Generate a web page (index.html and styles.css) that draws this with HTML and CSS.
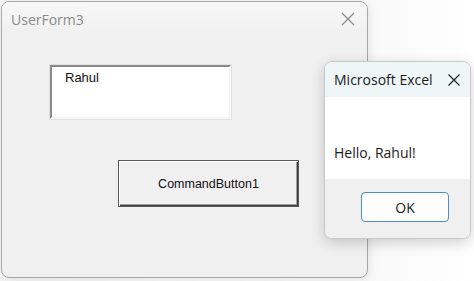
FILE: index.html
```html
<!DOCTYPE html>
<html>
<head>
<meta charset="utf-8">
<link rel="stylesheet" href="styles.css">
</head>
<body>
<div class="desk">
  <div class="form">
    <div class="form-title">
      <span class="form-name">UserForm3</span>
      <svg class="form-close" width="14" height="14" viewBox="0 0 14 14"><path d="M1 1L13 13M13 1L1 13" stroke="#8a8a8a" stroke-width="1.2" fill="none"/></svg>
    </div>
    <div class="form-body">
      <div class="textbox">Rahul</div>
      <div class="cmdbtn">CommandButton1</div>
    </div>
  </div>
  <div class="msgbox">
    <div class="msg-title">
      <span>Microsoft Excel</span>
      <svg class="msg-close" width="14" height="14" viewBox="0 0 14 14"><path d="M1.5 1.5L12.5 12.5M12.5 1.5L1.5 12.5" stroke="#222" stroke-width="1.2" fill="none"/></svg>
    </div>
    <div class="msg-body">Hello, Rahul!</div>
    <div class="msg-foot"><div class="okbtn">OK</div></div>
  </div>
</div>
</body>
</html>
```
FILE: styles.css
```css
html, body { margin: 0; padding: 0; }
body {
  width: 474px; height: 281px; overflow: hidden;
  background: linear-gradient(90deg, #f4f4f4 0%, #f8f8f8 75%, #ffffff 100%);
}
.desk { position: relative; width: 474px; height: 281px; padding: 1px 0 0 1px; box-sizing: border-box; }
.form {
  width: 367px; height: 277px; box-sizing: border-box;
  border: 1px solid #a8a8a8; border-radius: 8px;
  background: #f0f0f0;
  box-shadow: 2px 2px 8px rgba(0,0,0,0.08);
  display: flex; flex-direction: column;
}
.form-title {
  height: 34px; flex: none; display: flex; align-items: center; justify-content: space-between;
  padding: 0 12px 0 9px;
  background: linear-gradient(180deg, #f7f7f7, #f0f0f0);
  border-radius: 8px 8px 0 0;
}
.form-name { font-family: "Open Sans", "Noto Sans", sans-serif; font-size: 14px; color: #8a8a8a; }
.form-body { flex: 1; padding: 29px 0 0 48px; }
.textbox {
  width: 181px; height: 54px; box-sizing: border-box;
  background: #fff;
  border-top: 2px solid #8a8a8a; border-left: 2px solid #8a8a8a;
  border-right: 2px solid #f4f4f4; border-bottom: 2px solid #f4f4f4;
  outline: 1px solid #e3e3e3;
  font-family: "Liberation Sans", Arial, sans-serif; font-size: 13px; color: #111;
  padding: 3px 0 0 13px;
}
.cmdbtn {
  margin: 41px 0 0 68px;
  width: 181px; height: 47px; box-sizing: border-box;
  background: #f0f0f0;
  border: 1px solid #5a5a5a;
  box-shadow: inset 1px 1px 0 #ffffff, inset -1px -1px 0 #3a3a3a, inset -2px -2px 0 #a0a0a0;
  display: flex; align-items: center; justify-content: center;
  font-family: "Liberation Sans", Arial, sans-serif; font-size: 12.5px; color: #111;
}
.msgbox {
  position: absolute; left: 324px; top: 61px;
  width: 147px; height: 178px; box-sizing: border-box;
  border: 1px solid #c8c8c8; border-radius: 8px;
  background: #fff; overflow: hidden;
  box-shadow: 0 4px 14px rgba(0,0,0,0.18);
  display: flex; flex-direction: column;
  font-family: "Open Sans", "Noto Sans", sans-serif; color: #1a1a1a;
}
.msg-title {
  height: 35px; flex: none; display: flex; align-items: center; justify-content: space-between;
  padding: 0 9px 0 9px; background: #eef6f8; font-size: 14px;
}
.msg-body { height: 82px; flex: none; padding: 28px 0 0 9px; display: flex; align-items: center; box-sizing: border-box; font-size: 14px; }
.msg-foot { flex: 1; background: #f0f0f0; padding: 13px 0 0 36px; }
.okbtn {
  width: 88px; height: 30px; box-sizing: border-box;
  border: 1px solid #4a90c8; border-radius: 4px; background: #fdfdfd;
  display: flex; align-items: center; justify-content: center; font-size: 14px;
}
```
